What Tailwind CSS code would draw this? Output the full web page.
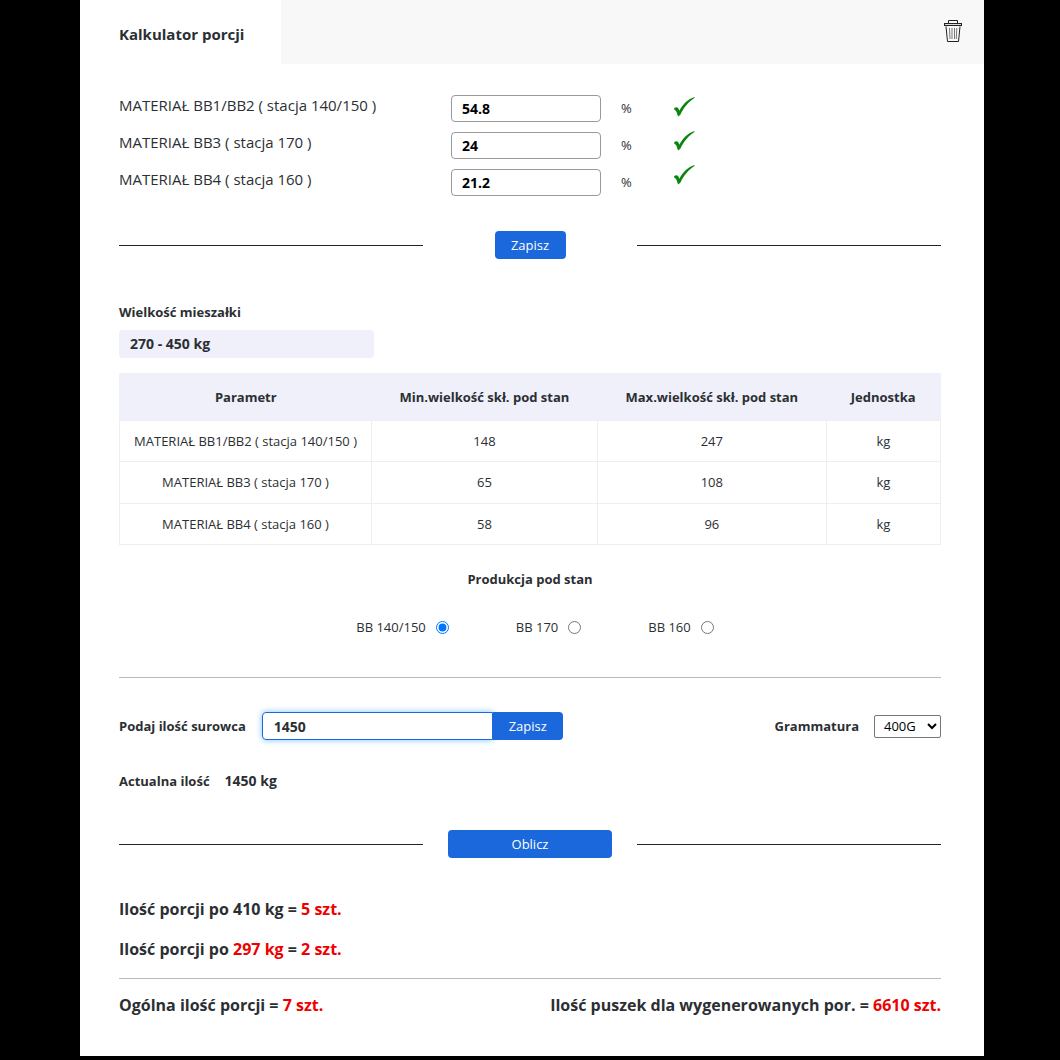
<!DOCTYPE html>
<html lang="pl">
<head>
<meta charset="utf-8">
<meta name="viewport" content="width=device-width, initial-scale=1">
<title>Kalkulator porcji</title>
<script src="https://cdn.jsdelivr.net/npm/@tailwindcss/browser@4"></script>
</head>
<body class="bg-black pl-20 pr-[76px] pb-1 font-['Open_Sans','Noto_Sans',sans-serif] text-sm text-[#2b2f33]">
<main class="bg-white pb-[39px]">
  <header class="flex h-16">
    <h1 class="flex w-[201px] items-center pt-1 pl-[39px] text-[15px] leading-6 font-bold whitespace-nowrap">Kalkulator porcji</h1>
    <div class="flex flex-1 items-start justify-end bg-[#f8f8f8] pt-[19px] pr-[21px]">
      <button type="button" aria-label="Usuń" class="h-6 w-5">
        <svg viewBox="0 0 20 24" class="h-6 w-5" fill="none" stroke="#222" stroke-width="1">
          <path d="M5.500 4V1.500h9V4"/>
          <rect x="1.500" y="4.500" width="17" height="2" fill="#ddd"/>
          <path d="M3 7.500l1.500 15h11l1.500-15"/>
          <path stroke="#777" d="M6.500 9l.5 11M9 9v11M11.500 9v11M13.800 9l-.5 11"/>
        </svg>
      </button>
    </div>
  </header>

  <div class="pr-[43px] pl-[39px]">
    <form class="mt-[31px] flex items-start">
      <div class="flex w-[332px] flex-col gap-[17px] text-[15px] leading-5">
        <label for="bb12">MATERIAŁ BB1/BB2 ( stacja 140/150 )</label>
        <label for="bb3">MATERIAŁ BB3 ( stacja 170 )</label>
        <label for="bb4">MATERIAŁ BB4 ( stacja 160 )</label>
      </div>
      <div class="flex w-[223px] flex-col gap-[10px] text-[13px]">
        <div class="flex items-center gap-5"><input id="bb12" value="54.8" class="h-[27px] w-[150px] rounded border border-[#999] px-[10px] text-sm font-bold text-black">%</div>
        <div class="flex items-center gap-5"><input id="bb3" value="24" class="h-[27px] w-[150px] rounded border border-[#999] px-[10px] text-sm font-bold text-black">%</div>
        <div class="flex items-center gap-5"><input id="bb4" value="21.2" class="h-[27px] w-[150px] rounded border border-[#999] px-[10px] text-sm font-bold text-black">%</div>
      </div>
      <div class="flex flex-col gap-[14px] pt-[2px]">
        <svg viewBox="0 0 21 20" class="h-5 w-[21px]" fill="#0a860c"><path d="M0 11.500C2 9.500 4.500 10 5.300 13.800C9 7 14 2 20.500 0v1C14.500 4.500 9.500 11 6.500 17.500L4.300 19.500C3.200 18 2.800 13.200 .5 13z"/></svg>
        <svg viewBox="0 0 21 20" class="h-5 w-[21px]" fill="#0a860c"><path d="M0 11.500C2 9.500 4.500 10 5.300 13.800C9 7 14 2 20.500 0v1C14.500 4.500 9.500 11 6.500 17.500L4.300 19.500C3.200 18 2.800 13.200 .5 13z"/></svg>
        <svg viewBox="0 0 21 20" class="h-5 w-[21px]" fill="#0a860c"><path d="M0 11.500C2 9.500 4.500 10 5.300 13.800C9 7 14 2 20.500 0v1C14.500 4.500 9.500 11 6.500 17.500L4.300 19.500C3.200 18 2.800 13.200 .5 13z"/></svg>
      </div>
    </form>

    <div class="mt-[35px] flex items-center">
      <div class="h-px flex-1 bg-[#212529]"></div>
      <div class="flex w-[214px] justify-center"><button type="button" class="h-7 w-[71px] rounded bg-[#1a68dc] text-[13px] text-white">Zapisz</button></div>
      <div class="h-px flex-1 bg-[#212529]"></div>
    </div>

    <h2 class="mt-[43px] text-[13px] leading-5 font-bold">Wielkość mieszałki</h2>
    <div class="mt-2 flex h-7 w-[255px] items-center rounded bg-[#eff0f9] px-[11px] text-sm font-bold">270 - 450 kg</div>

    <table class="mt-[15px] w-full table-fixed border-collapse text-center text-[13px]">
      <colgroup><col class="w-[30.7%]"><col class="w-[27.5%]"><col class="w-[27.9%]"><col class="w-[13.9%]"></colgroup>
      <thead class="bg-[#eff0f9]">
        <tr class="h-[47px] border border-[#eff0f9] font-bold"><th>Parametr</th><th>Min.wielkość skł. pod stan</th><th>Max.wielkość skł. pod stan</th><th>Jednostka</th></tr>
      </thead>
      <tbody>
        <tr class="h-[41px]"><td class="border border-[#eee]">MATERIAŁ BB1/BB2 ( stacja 140/150 )</td><td class="border border-[#eee]">148</td><td class="border border-[#eee]">247</td><td class="border border-[#eee]">kg</td></tr>
        <tr class="h-[42px]"><td class="border border-[#eee]">MATERIAŁ BB3 ( stacja 170 )</td><td class="border border-[#eee]">65</td><td class="border border-[#eee]">108</td><td class="border border-[#eee]">kg</td></tr>
        <tr class="h-[41px]"><td class="border border-[#eee]">MATERIAŁ BB4 ( stacja 160 )</td><td class="border border-[#eee]">58</td><td class="border border-[#eee]">96</td><td class="border border-[#eee]">kg</td></tr>
      </tbody>
    </table>

    <fieldset class="mt-6 flex flex-col items-center text-[13px] leading-5">
      <legend class="mx-auto font-bold">Produkcja pod stan</legend>
      <div class="mt-7 flex gap-[67px] pl-[10px]">
        <label class="flex items-center gap-[10px]">BB 140/150 <input type="radio" name="stan" checked class="size-[13px]"></label>
        <label class="flex items-center gap-[10px]">BB 170 <input type="radio" name="stan" class="size-[13px]"></label>
        <label class="flex items-center gap-[10px]">BB 160 <input type="radio" name="stan" class="size-[13px]"></label>
      </div>
    </fieldset>

    <hr class="mt-10 border-[#bbb]">

    <form class="mt-[34px] flex items-center text-[13px]">
      <label for="ilosc" class="font-bold">Podaj ilość surowca</label>
      <input id="ilosc" value="1450" autofocus class="ml-4 h-7 w-[231px] rounded-l border border-[#1a68dc] px-[11px] text-sm font-bold shadow-[0_0_6px_#7fc1ff] outline-none">
      <button type="button" class="z-10 h-7 w-[70px] rounded-r bg-[#1a68dc] text-[13px] text-white">Zapisz</button>
      <label for="gram" class="ml-auto font-bold">Grammatura</label>
      <select id="gram" class="ml-[15px] h-[23px] w-[67px] rounded-xs border border-[#767676] bg-white pl-[5px] text-[13px] text-black"><option>400G</option></select>
    </form>

    <p class="mt-[31px] flex items-center gap-[15px] text-[13px] leading-5 font-bold"><span>Actualna ilość</span><span class="text-sm">1450 kg</span></p>

    <div class="mt-[39px] flex items-center">
      <div class="h-px flex-1 bg-[#212529]"></div>
      <div class="flex w-[214px] justify-center"><button type="button" class="h-7 w-[164px] rounded bg-[#1a68dc] text-[13px] text-white">Oblicz</button></div>
      <div class="h-px flex-1 bg-[#212529]"></div>
    </div>

    <div class="mt-[39px] text-base leading-6 font-bold">
      <p>Ilość porcji po 410 kg = <span class="text-[#ee0000]">5 szt.</span></p>
      <p class="mt-4">Ilość porcji po <span class="text-[#ee0000]">297 kg</span> = <span class="text-[#ee0000]">2 szt.</span></p>
      <hr class="mt-[17px] border-[#bbb]">
      <div class="mt-[14px] flex justify-between">
        <p>Ogólna ilość porcji = <span class="text-[#ee0000]">7 szt.</span></p>
        <p>Ilość puszek dla wygenerowanych por. = <span class="text-[#ee0000]">6610 szt.</span></p>
      </div>
    </div>
  </div>
</main>
<script>
  const amount = document.getElementById('ilosc');
  amount.focus();
  amount.setSelectionRange(4, 4);
</script>
</body>
</html>
